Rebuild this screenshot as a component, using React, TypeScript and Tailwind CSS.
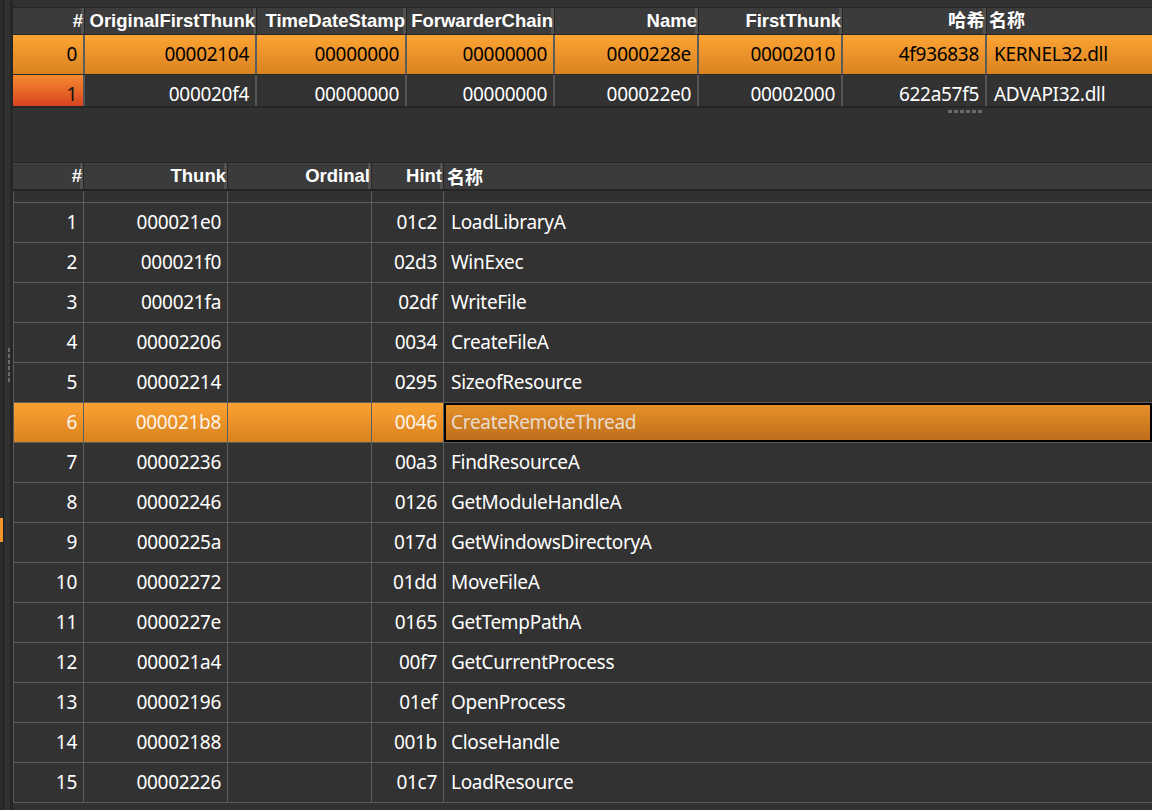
import React from 'react';

const body = { fontFamily: '"Noto Sans", sans-serif' };
const head = { fontFamily: '"Liberation Sans", "Noto Sans CJK SC", sans-serif' };

const modules = [
  ['0', '00002104', '00000000', '00000000', '0000228e', '00002010', '4f936838', 'KERNEL32.dll'],
  ['1', '000020f4', '00000000', '00000000', '000022e0', '00002000', '622a57f5', 'ADVAPI32.dll'],
];

const imports = [
  ['1', '000021e0', '01c2', 'LoadLibraryA'],
  ['2', '000021f0', '02d3', 'WinExec'],
  ['3', '000021fa', '02df', 'WriteFile'],
  ['4', '00002206', '0034', 'CreateFileA'],
  ['5', '00002214', '0295', 'SizeofResource'],
  ['6', '000021b8', '0046', 'CreateRemoteThread'],
  ['7', '00002236', '00a3', 'FindResourceA'],
  ['8', '00002246', '0126', 'GetModuleHandleA'],
  ['9', '0000225a', '017d', 'GetWindowsDirectoryA'],
  ['10', '00002272', '01dd', 'MoveFileA'],
  ['11', '0000227e', '0165', 'GetTempPathA'],
  ['12', '000021a4', '00f7', 'GetCurrentProcess'],
  ['13', '00002196', '01ef', 'OpenProcess'],
  ['14', '00002188', '001b', 'CloseHandle'],
  ['15', '00002226', '01c7', 'LoadResource'],
];

const topWidths = ['w-[72px]', 'w-[172px]', 'w-[150px]', 'w-[148px]', 'w-[144px]', 'w-[144px]', 'w-[144px]'];
const topHeads = ['#', 'OriginalFirstThunk', 'TimeDateStamp', 'ForwarderChain', 'Name', 'FirstThunk', '哈希'];

const botWidths = ['w-[70px]', 'w-[144px]', 'w-[144px]', 'w-[72px]'];
const botHeads = ['#', 'Thunk', 'Ordinal', 'Hint'];

function HeadCell({ w, label }: { w: string; label: string }) {
  return (
    <div
      className={`${w} shrink-0 h-full flex items-center justify-end pr-[1px] border-r border-[#262626] shadow-[inset_-3px_0_0_#525252] text-white font-bold text-[18.5px] leading-none whitespace-nowrap overflow-hidden`}
      style={head}
    >
      <span className="relative">{label}</span>
    </div>
  );
}

function GripDots({ vertical }: { vertical?: boolean }) {
  return (
    <div className={vertical ? 'flex flex-col gap-[2px]' : 'flex gap-[2px]'}>
      {[0, 1, 2, 3, 4, 5].map((i) => (
        <div key={i} className={vertical ? 'w-[2px] h-[4px] bg-[#6c6c6c]' : 'w-[4px] h-[3px] bg-[#6c6c6c]'} />
      ))}
    </div>
  );
}

export default function App() {
  return (
    <div className="w-[1152px] h-[810px] overflow-hidden bg-[#313131] flex" style={body}>
      {/* left splitter strip */}
      <div className="w-[13px] shrink-0 flex h-full">
        <div className="w-[3px] bg-[#2b2b2b] flex flex-col">
          <div className="h-[518px]" />
          <div className="h-[24px] w-[4px] bg-[#f0962c]" />
        </div>
        <div className="w-[1px] bg-[#1f1f1f]" />
        <div className="w-[6px] flex flex-col items-end pt-[348px]">
          <GripDots vertical />
        </div>
        <div className="w-[2px] bg-[#282828]" />
        <div className="w-[1px] bg-[#242424]" />
      </div>

      <div className="flex-1 min-w-0 flex flex-col pt-[7px]">
        {/* modules table */}
        <div className="border-t border-[#252525] border-b-2 border-b-[#262626] overflow-hidden">
          <div className="h-[27px] flex bg-[#3b3b3b] border-b border-[#262626]">
            {topHeads.map((h, i) => (
              <HeadCell key={h} w={topWidths[i]} label={h} />
            ))}
            <div
              className="flex-1 h-full flex items-center pl-[2px] text-white font-bold text-[18px] leading-none"
              style={head}
            >
              名称
            </div>
          </div>
          {modules.map((r, ri) => (
            <div
              key={r[0]}
              className={`${ri === 0 ? 'h-[40px] border-b border-[#2a2a2a]' : 'h-[31px]'} overflow-hidden`}
            >
              <div
                className={`h-[39px] flex text-[19px] tracking-[-0.3px] ${ri === 0 ? 'bg-linear-to-b from-[#fca433] to-[#da8220] text-black' : 'bg-[#323232] text-white'}`}
              >
                {r.slice(0, 7).map((c, ci) => (
                  <div
                    key={ci}
                    className={`${topWidths[ci]} shrink-0 flex items-center justify-end pr-[6px] border-r-2 ${ri === 0 ? 'border-[#5c5c5c]' : 'border-[#555555]'} ${ri === 1 && ci === 0 ? 'bg-linear-to-b from-[#f48a30] to-[#d0281c] text-[#111]' : ''}`}
                  >
                    {c}
                  </div>
                ))}
                <div className="flex-1 flex items-center pl-[7px]">{r[7]}</div>
              </div>
            </div>
          ))}
        </div>

        {/* splitter grip */}
        <div className="h-[54px] pl-[935px] pt-[2px]">
          <GripDots />
        </div>

        {/* imports table */}
        <div className="border-t border-[#262626] flex flex-col">
          <div className="h-[26px] flex bg-[#3b3b3b] border-l border-[#3b3b3b] shadow-[inset_0_1px_0_#444]">
            {botHeads.map((h, i) => (
              <HeadCell key={h} w={botWidths[i]} label={h} />
            ))}
            <div
              className="flex-1 h-full flex items-center pl-[3px] text-white font-bold text-[18px] leading-none"
              style={{ fontFamily: '"Noto Sans CJK SC", sans-serif' }}
            >
              名称
            </div>
          </div>
          <div className="h-[2px] bg-[#242424]" />
          <div className="border-l border-[#5d5d5d]">
            <div className="h-[12px] flex border-b border-[#5d5d5d]">
              {botWidths.map((w, i) => (
                <div key={i} className={`${w} shrink-0 border-r border-[#5d5d5d]`} />
              ))}
              <div className="flex-1" />
            </div>
            {imports.map((r) => {
              const sel = r[0] === '6';
              return (
                <div
                  key={r[0]}
                  className={`h-[40px] flex border-b border-[#5d5d5d] text-[19px] tracking-[-0.3px] ${sel ? 'bg-linear-to-b from-[#fba232] to-[#d9821f] text-[#fbf3ea]' : 'bg-[#323232] text-white'}`}
                >
                  <div className={`${botWidths[0]} shrink-0 flex items-center justify-end pr-[6px] border-r border-[#5d5d5d]`}>{r[0]}</div>
                  <div className={`${botWidths[1]} shrink-0 flex items-center justify-end pr-[6px] border-r border-[#5d5d5d]`}>{r[1]}</div>
                  <div className={`${botWidths[2]} shrink-0 border-r border-[#5d5d5d]`} />
                  <div className={`${botWidths[3]} shrink-0 flex items-center justify-end pr-[6px] border-r border-[#5d5d5d]`}>{r[2]}</div>
                  {sel ? (
                    <div className="flex-1 flex items-center pl-[5px] border-2 border-black bg-linear-to-b from-[#e59029] to-[#bf6f1c] text-[#e9dccf]">
                      {r[3]}
                    </div>
                  ) : (
                    <div className="flex-1 flex items-center pl-[7px]">{r[3]}</div>
                  )}
                </div>
              );
            })}
          </div>
        </div>
      </div>
    </div>
  );
}
